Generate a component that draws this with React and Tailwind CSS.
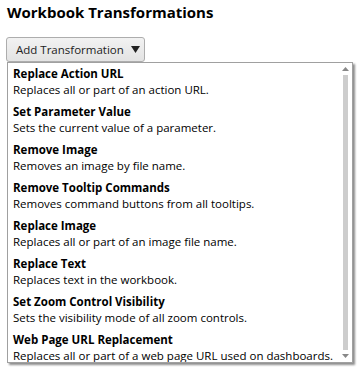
import React from 'react';

const items = [
  ['Replace Action URL', 'Replaces all or part of an action URL.'],
  ['Set Parameter Value', 'Sets the current value of a parameter.'],
  ['Remove Image', 'Removes an image by file name.'],
  ['Remove Tooltip Commands', 'Removes command buttons from all tooltips.'],
  ['Replace Image', 'Replaces all or part of an image file name.'],
  ['Replace Text', 'Replaces text in the workbook.'],
  ['Set Zoom Control Visibility', 'Sets the visibility mode of all zoom controls.'],
  ['Web Page URL Replacement', 'Replaces all or part of a web page URL used on dashboards.'],
];

export default function App() {
  return (
    <div className="w-[360px] h-[369px] bg-white text-black overflow-hidden" style={{ fontFamily: '"Open Sans", "Noto Sans", sans-serif' }}>
      <h1 className="pl-[7px] pt-[1px] text-[15px] font-bold leading-[22px]">Workbook Transformations</h1>
      <div className="pl-[6px] pt-[14px]">
        <button className="flex items-center gap-[7px] h-[25px] w-[139px] pl-[9px] rounded-[3px] border border-[#adadad] bg-gradient-to-b from-[#f2f2f2] to-[#e3e3e3] text-[11.5px] text-[#222] whitespace-nowrap">
          <span>Add Transformation</span>
          <svg width="9" height="7" viewBox="0 0 9 7"><path d="M0 0h9L4.5 7z" fill="#222" /></svg>
        </button>
      </div>
      <div className="ml-[7px] w-[346px] h-[301px] border border-[#a0a0a0] bg-white shadow-[2px_2px_2px_rgba(0,0,0,0.45)] flex">
        <div className="flex-1 pt-[3px] pl-[5px] overflow-hidden">
          {items.map(([t, d]) => (
            <div key={t} className="pb-[6px] text-[11.5px] leading-[16px] whitespace-nowrap">
              <div className="font-bold">{t}</div>
              <div>{d}</div>
            </div>
          ))}
        </div>
        <div className="w-[14px] flex flex-col items-center pt-[4px] pb-[4px]">
          <svg width="7" height="4" viewBox="0 0 7 4"><path d="M0 4L3.5 0L7 4z" fill="#888" /></svg>
          <div className="w-[5px] flex-1 bg-[#cdcdcd] my-[4px]" />
          <svg width="7" height="4" viewBox="0 0 7 4"><path d="M0 0h7L3.5 4z" fill="#888" /></svg>
        </div>
      </div>
    </div>
  );
}
